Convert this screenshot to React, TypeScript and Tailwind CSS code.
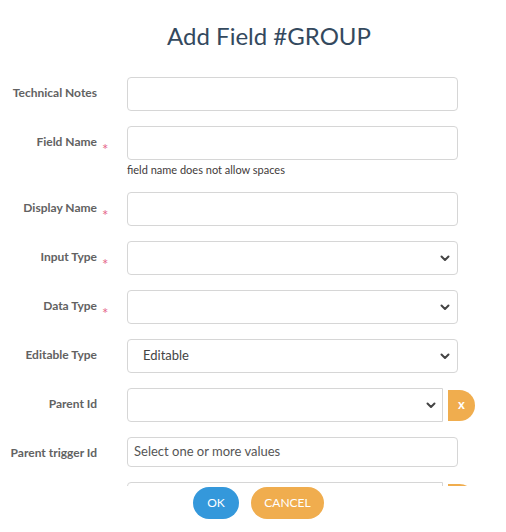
import React from "react";

const Chevron = () => (
  <svg width="10" height="7" viewBox="0 0 10 7" className="shrink-0">
    <polyline points="1.5,1.5 5,5 8.5,1.5" fill="none" stroke="#444" strokeWidth="2" strokeLinecap="round" strokeLinejoin="round" />
  </svg>
);

const Label = ({ text, required }: { text: string; required?: boolean }) => (
  <div className="flex shrink-0">
    <div className="w-[97px] pt-[7px] text-right text-[12px] leading-[17px] font-bold text-[#626262] whitespace-nowrap">{text}</div>
    <div className="w-[30px] pl-[5px] pt-[15px] text-[15px] leading-[17px] text-[#e5688a]">{required ? "*" : ""}</div>
  </div>
);

const TextBox = ({ placeholder }: { placeholder?: string }) => (
  <div className="w-[331px] h-[34px] border border-[#d6d6d6] rounded-[4px] bg-white flex items-center px-[6px] text-[13px] text-[#555]">
    {placeholder}
  </div>
);

const SelectBox = ({ value }: { value?: string }) => (
  <div className="w-[331px] h-[34px] border border-[#d6d6d6] rounded-[4px] bg-white flex items-center justify-between pl-[15px] pr-[7px] text-[13px] text-[#444]">
    <span>{value}</span>
    <Chevron />
  </div>
);

const GroupSelect = ({ showX = true }: { showX?: boolean }) => (
  <div className="flex items-start gap-[5px]">
    <div className="w-[316px] h-[34px] border border-[#d6d6d6] rounded-l-[4px] bg-white flex items-center justify-end pr-[6px]">
      <Chevron />
    </div>
    <div className="mt-[2px] w-[27px] h-[31px] bg-[#f0ad4e] rounded-r-full flex items-center justify-center text-white text-[13px] font-bold leading-none pb-[2px]">
      {showX ? "x" : ""}
    </div>
  </div>
);

export default function App() {
  return (
    <div className="w-[506px] h-[532px] bg-white overflow-hidden font-['Lato',sans-serif]">
      <div className="pt-[23px] pl-[32px] text-center text-[24px] leading-[26px] text-[#34495e]">Add Field #GROUP</div>
      <div className="mt-[28px] h-[409px] overflow-hidden flex flex-col gap-[15px]">
        <div className="flex">
          <Label text="Technical Notes" />
          <TextBox />
        </div>
        <div className="flex">
          <Label text="Field Name" required />
          <div className="flex flex-col">
            <TextBox />
            <div className="mt-[3px] text-[11px] leading-[14px] text-[#3f3a3a]">field name does not allow spaces</div>
          </div>
        </div>
        <div className="flex">
          <Label text="Display Name" required />
          <TextBox />
        </div>
        <div className="flex">
          <Label text="Input Type" required />
          <SelectBox />
        </div>
        <div className="flex">
          <Label text="Data Type" required />
          <SelectBox />
        </div>
        <div className="flex">
          <Label text="Editable Type" />
          <SelectBox value="Editable" />
        </div>
        <div className="flex">
          <Label text="Parent Id" />
          <GroupSelect />
        </div>
        <div className="flex">
          <Label text="Parent trigger Id" />
          <div className="w-[331px] h-[30px] border border-[#d6d6d6] rounded-[4px] bg-white flex items-center px-[6px] text-[13px] text-[#555]">
            Select one or more values
          </div>
        </div>
        <div className="flex">
          <Label text="" />
          <GroupSelect showX={false} />
        </div>
      </div>
      <div className="pt-[1px] pl-[11px] flex justify-center gap-[12px]">
        <div className="h-[32px] w-[46px] rounded-full bg-[#3498db] text-white text-[12px] flex items-center justify-center">OK</div>
        <div className="h-[32px] w-[73px] rounded-full bg-[#f0ad4e] text-white text-[12px] flex items-center justify-center">CANCEL</div>
      </div>
    </div>
  );
}
